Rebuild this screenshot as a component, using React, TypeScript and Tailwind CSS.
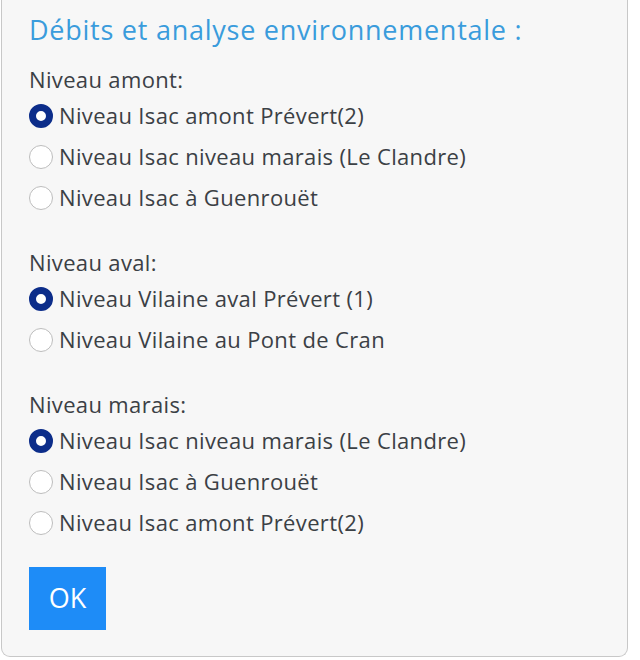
import { useState } from "react";

type Group = { label: string; name: string; options: string[] };

const groups: Group[] = [
    {
        label: "Niveau amont:",
        name: "amont",
        options: ["Niveau Isac amont Prévert(2)", "Niveau Isac niveau marais (Le Clandre)", "Niveau Isac à Guenrouët"],
    },
    {
        label: "Niveau aval:",
        name: "aval",
        options: ["Niveau Vilaine aval Prévert (1)", "Niveau Vilaine au Pont de Cran"],
    },
    {
        label: "Niveau marais:",
        name: "marais",
        options: ["Niveau Isac niveau marais (Le Clandre)", "Niveau Isac à Guenrouët", "Niveau Isac amont Prévert(2)"],
    },
];

function Radio({ checked, onClick, text }: { checked: boolean; onClick: () => void; text: string }) {
    return (
        <label onClick={onClick} className="flex items-center h-[41px] cursor-pointer">
            <span
                className={
                    checked
                        ? "w-[24px] h-[24px] rounded-full border-[7px] border-[#0c2d8a] bg-white shrink-0"
                        : "w-[24px] h-[24px] rounded-full border border-[#bdbdbd] bg-white shrink-0"
                }
            ></span>
            <span className="ml-[6px]">{text}</span>
        </label>
    );
}

export default function App() {
    const [values, setValues] = useState<Record<string, number>>({ amont: 0, aval: 0, marais: 0 });

    return (
        <div className="w-[640px] h-[660px] bg-white" style={{ fontFamily: "'Open Sans', 'Noto Sans', sans-serif" }}>
            <div className="ml-[1px] w-[627px] h-[657px] bg-[#f7f7f7] border-x border-b border-[#c8c8c8] rounded-b-[9px] pl-[27px] pt-[12px]">
                <h2 className="text-[27px] leading-[36px] tracking-[0.75px] text-[#3a9cdc]">Débits et analyse environnementale :</h2>
                <div className="mt-[16px] flex flex-col gap-[29px] text-[22px] tracking-[0.35px] text-[#3b4045]">
                    {groups.map((g) => (
                        <div key={g.name} className="flex flex-col">
                            <p className="h-[31px] leading-[31px]">{g.label}</p>
                            {g.options.map((o, i) => (
                                <Radio
                                    key={o}
                                    text={o}
                                    checked={values[g.name] === i}
                                    onClick={() => setValues({ ...values, [g.name]: i })}
                                />
                            ))}
                        </div>
                    ))}
                </div>
                <button className="mt-[24px] w-[77px] h-[63px] bg-[#1e8cf7] text-white text-[27px]">OK</button>
            </div>
        </div>
    );
}
